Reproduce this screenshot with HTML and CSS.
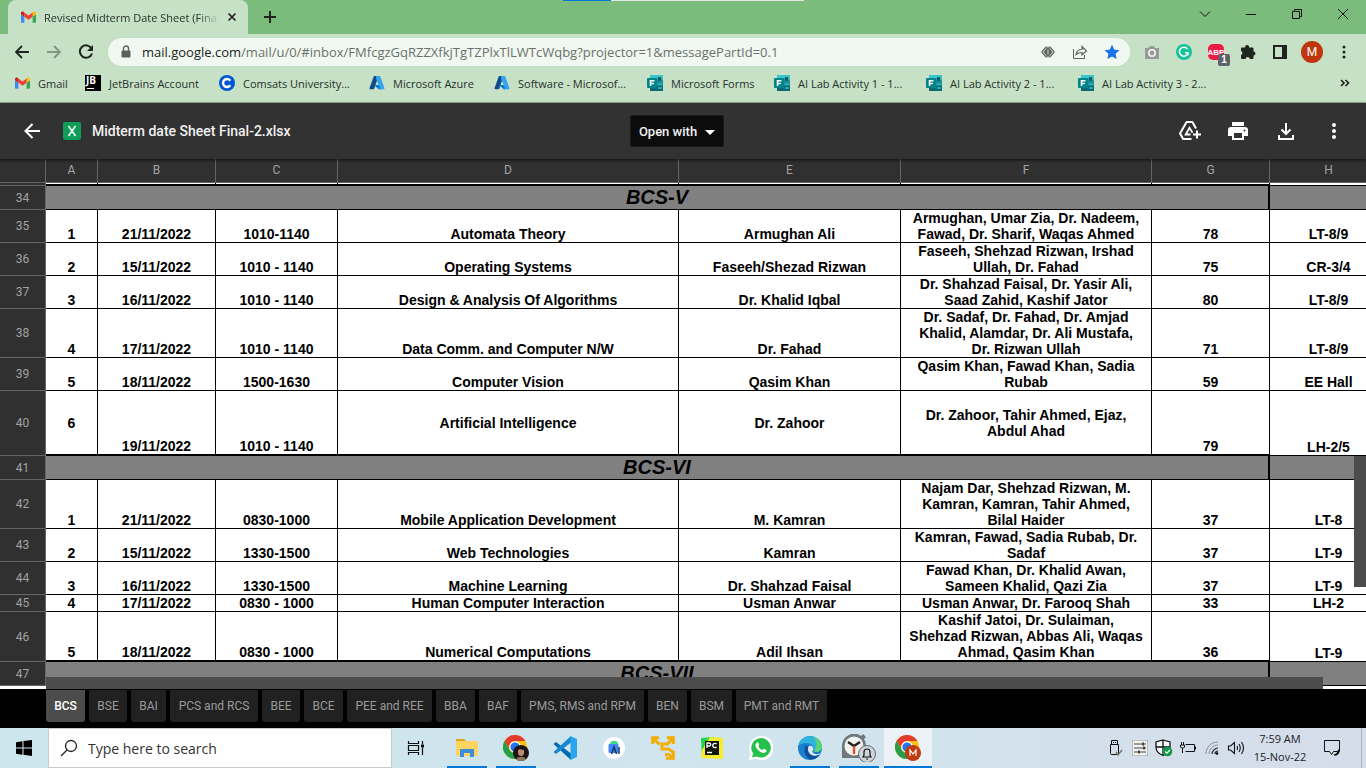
FILE: index.html
```
<!DOCTYPE html>
<html lang="en">
<head>
<meta charset="utf-8">
<title>Midterm date Sheet Final-2.xlsx</title>
<link rel="stylesheet" href="styles.css">
</head>
<body>
<svg class="defs" aria-hidden="true">
  <symbol id="gmail" viewBox="0 0 16 12">
    <path fill="#4285f4" d="M1 12h2.6V5.6L0 3v8a1 1 0 0 0 1 1z"/>
    <path fill="#34a853" d="M12.4 12H15a1 1 0 0 0 1-1V3l-3.6 2.6z"/>
    <path fill="#fbbc04" d="M12.4 1.2v4.6L16 3V1.7C16 .2 14.300-.5 13 .6z"/>
    <path fill="#ea4335" d="M3.600 5.800V1.200L8 4.500l4.400-3.300v4.600L8 9z"/>
    <path fill="#c5221f" d="M0 1.700V3l3.600 2.800V1.200L3 .6C1.700-.5 0 .2 0 1.700z"/>
  </symbol>
  <symbol id="azure" viewBox="0 0 16 16">
    <path fill="#114a8b" d="M5.500 1h4L5.300 13.600a1 1 0 0 1-.9.700H1.500a1 1 0 0 1-.9-1.300L4.600 1.700a1 1 0 0 1 .9-.7z"/>
    <path fill="#0078d4" d="M5 10h6.500l1 4.300H9.800z"/>
    <path fill="#35a5ef" d="M7.500 1h3a1 1 0 0 1 .9.700l4 11.300a1 1 0 0 1-.9 1.300h-4a1 1 0 0 0 .4-1.300L6.800 3z"/>
  </symbol>
  <symbol id="forms" viewBox="0 0 16 16">
    <path fill="#37c6d0" d="M3 0h13v6H3z"/><path fill="#1a8f98" d="M3 5h13v6H3z"/><path fill="#0a6970" d="M3 11h13v5H3z"/>
    <circle cx="12.500" cy="4" r="2" fill="#0b5b60"/><path fill="#25a9b2" d="M11 8h4v2h-4zm0 4h4v2h-4z"/>
    <rect y="3" width="10" height="10" rx="1" fill="#038387"/>
    <path d="M3.500 11V5.700h4M3.500 8.400h3.400" fill="none" stroke="#fff" stroke-width="1.500"/>
  </symbol>
  <symbol id="chrome" viewBox="0 0 24 24">
    <circle cx="12" cy="12" r="12" fill="#fbc116"/>
    <path fill="#e33b2e" d="M1.600 6A12 12 0 0 1 22.400 6H12a6 6 0 0 0-5.200 9z"/>
    <path fill="#269f4b" d="M1.600 6l5.200 9A6 6 0 0 0 12 18l2.500 0L12 24A12 12 0 0 1 1.600 6z"/>
    <circle cx="12" cy="12" r="5.800" fill="#fff"/><circle cx="12" cy="12" r="4.600" fill="#2272e8"/>
  </symbol>
</svg>

<div class="snap-strip"></div>

<header class="browser">
  <div class="tabstrip">
    <div class="tab">
      <svg class="gm"><use href="#gmail"/></svg>
      <span class="tab-title">Revised Midterm Date Sheet (Final</span>
      <button class="plain" aria-label="Close tab"><svg width="10" height="10" viewBox="0 0 10 10"><path d="M1.500 1.500l7 7m0-7l-7 7" stroke="#222" stroke-width="1.700"/></svg></button>
    </div>
    <button class="plain newtab" aria-label="New tab"><svg width="12" height="12" viewBox="0 0 12 12"><path d="M6 0v12M0 6h12" stroke="#1e231e" stroke-width="2"/></svg></button>
    <div class="winctl">
      <button class="plain" aria-label="Search tabs"><svg width="12" height="12" viewBox="0 0 12 12"><path d="M1 3.500l5 5 5-5" fill="none" stroke="#111"/></svg></button>
      <button class="plain" aria-label="Minimize"><svg width="10" height="10" viewBox="0 0 10 10"><path d="M0 5.500h10" stroke="#111"/></svg></button>
      <button class="plain" aria-label="Restore"><svg width="10" height="10" viewBox="0 0 10 10"><path d="M.5 2.500h7v7h-7zM2.500 2.500v-2h7v7h-2" fill="none" stroke="#111"/></svg></button>
      <button class="plain" aria-label="Close"><svg width="10" height="10" viewBox="0 0 10 10"><path d="M0 0l10 10M10 0L0 10" stroke="#111"/></svg></button>
    </div>
  </div>

  <div class="toolbar">
    <div class="nav">
      <button class="plain" aria-label="Back"><svg width="14" height="14" viewBox="0 0 14 14"><path d="M14 7H1.500M7 1L1 7l6 6" fill="none" stroke="#20241f" stroke-width="1.800"/></svg></button>
      <button class="plain" aria-label="Forward"><svg width="14" height="14" viewBox="0 0 14 14"><path d="M0 7h12.500M7 1l6 6-6 6" fill="none" stroke="#839583" stroke-width="1.800"/></svg></button>
      <button class="plain" aria-label="Reload"><svg width="16" height="16" viewBox="0 0 16 16"><path d="M13.500 4.500A6.200 6.200 0 1 0 14 9.500" fill="none" stroke="#20241f" stroke-width="2"/><path fill="#20241f" d="M15 1v6H9z"/></svg></button>
    </div>
    <div class="omnibox">
      <svg width="10" height="14" viewBox="0 0 10 14"><path d="M2.500 6V3.500a2.500 2.500 0 0 1 5 0V6" fill="none" stroke="#5b605b" stroke-width="1.400"/><rect x=".5" y="5.500" width="9" height="7" rx="1" fill="#5b605b"/></svg>
      <div class="url" role="textbox" aria-label="Address"><b>mail.google.com</b>/mail/u/0/#inbox/FMfcgzGqRZZXfkjTgTZPlxTlLWTcWqbg?projector=1&amp;messagePartId=0.1</div>
      <button class="plain" aria-label="Reader"><svg width="14" height="12" viewBox="0 0 14 12"><path d="M5.500.5L.7 6l4.800 5.500M8.500.5L13.300 6l-4.800 5.500" fill="none" stroke="#5f635f" stroke-width="1.200"/><path d="M7 .5L11.500 6 7 11.500 2.500 6z" fill="#5f635f"/><path d="M7 3.500v5" stroke="#c5cbc5" stroke-width="1.200"/></svg></button>
      <button class="plain" aria-label="Share"><svg width="16" height="14" viewBox="0 0 16 14"><path d="M1.500 4v9.500h11V10" fill="none" stroke="#5f635f"/><path d="M4 9.500c.5-3.500 2.500-5 6-5V1.500L14.500 6 10 10V7.500c-3 0-4.500.5-6 2z" fill="none" stroke="#5f635f" stroke-width="1.200"/></svg></button>
      <button class="plain" aria-label="Bookmark"><svg width="16" height="16" viewBox="0 0 16 16"><path fill="#1a73e8" d="M8 .7l2.200 4.900 5.300.6-3.900 3.600 1 5.300L8 12.400l-4.600 2.700 1-5.300L.5 6.200l5.300-.6z"/></svg></button>
    </div>
    <div class="exts">
      <button class="plain" aria-label="Screenshot"><svg width="16" height="14" viewBox="0 0 16 14"><path fill="#999" d="M1 3h3l2-2h4l1 2h4v11H1z"/><circle cx="8" cy="8" r="3.200" fill="#999" stroke="#f2f2f2" stroke-width="1.600"/></svg></button>
      <button class="plain" aria-label="Grammarly"><svg width="16" height="16" viewBox="0 0 16 16"><circle cx="8" cy="8" r="8" fill="#15c39a"/><path d="M11.500 5A4.500 4.500 0 1 0 12 9.500M9 8.800h3v2.500" fill="none" stroke="#fff" stroke-width="1.400"/></svg></button>
      <button class="plain abp" aria-label="Adblock Plus">ABP<span class="count">1</span></button>
      <button class="plain" aria-label="Extensions"><svg width="16" height="16" viewBox="0 0 16 16"><path fill="#20241f" d="M1 4.500a1 1 0 0 1 1-1h3.200a2 2 0 1 1 3.800 0h3.500a1 1 0 0 1 1 1V7.500a2 2 0 1 1 0 4V14a1 1 0 0 1-1 1H9.800a2.100 2.100 0 0 0-4.200 0H2a1 1 0 0 1-1-1v-3a2.100 2.100 0 0 0 0-4z"/></svg></button>
      <button class="plain" aria-label="Side panel"><svg width="14" height="14" viewBox="0 0 14 14"><path d="M1 1h12v12H1z" fill="none" stroke="#20241f" stroke-width="2"/><path fill="#20241f" d="M9 0h5v14H9z"/></svg></button>
      <button class="plain avatar" aria-label="Profile">M</button>
      <button class="plain" aria-label="Menu"><svg width="4" height="14" viewBox="0 0 4 14"><g fill="#20241f"><circle cx="2" cy="2" r="1.500"/><circle cx="2" cy="7" r="1.500"/><circle cx="2" cy="12" r="1.500"/></g></svg></button>
    </div>
  </div>

  <nav class="bookmarks">
    <a href="#"><svg class="gm"><use href="#gmail"/></svg>Gmail</a>
    <a href="#"><span class="jb">JB</span>JetBrains Account</a>
    <a href="#"><svg class="fav" viewBox="0 0 16 16"><circle cx="8" cy="8" r="8" fill="#0056d2"/><path d="M11.300 5.700a4 4 0 1 0 0 4.600" fill="none" stroke="#fff" stroke-width="2.400"/></svg>Comsats University...</a>
    <a href="#"><svg class="fav"><use href="#azure"/></svg>Microsoft Azure</a>
    <a href="#"><svg class="fav"><use href="#azure"/></svg>Software - Microsof...</a>
    <a href="#"><svg class="fav"><use href="#forms"/></svg>Microsoft Forms</a>
    <a href="#"><svg class="fav"><use href="#forms"/></svg>AI Lab Activity 1 - 1...</a>
    <a href="#"><svg class="fav"><use href="#forms"/></svg>AI Lab Activity 2 - 1...</a>
    <a href="#"><svg class="fav"><use href="#forms"/></svg>AI Lab Activity 3 - 2...</a>
    <button class="plain" aria-label="More bookmarks"><svg width="10" height="8" viewBox="0 0 10 8"><path d="M1 1l3 3-3 3M5.500 1l3 3-3 3" fill="none" stroke="#20241f" stroke-width="1.700"/></svg></button>
  </nav>
</header>

<div class="appbar">
  <div class="file">
    <button class="plain" aria-label="Back"><svg width="16" height="16" viewBox="0 0 16 16"><path d="M16 8H1.500M8.500 1l-7 7 7 7" fill="none" stroke="#fff" stroke-width="2"/></svg></button>
    <svg class="xl" width="18" height="18" viewBox="0 0 18 18"><rect width="18" height="18" rx="2" fill="#0f9d58"/><path d="M5.500 4l7 10m0-10l-7 10" stroke="#e4f5ec" stroke-width="1.800"/></svg>
    <h1>Midterm date Sheet Final-2.xlsx</h1>
  </div>
  <button class="openwith">Open with<svg width="10" height="7" viewBox="0 0 10 7"><path fill="#fff" d="M0 2h10L5 7z"/></svg></button>
  <div class="actions">
    <button class="plain" aria-label="Add to Drive"><svg width="24" height="22" viewBox="0 0 24 22"><path d="M13.500 19H5.200L2 13.500 8.600 2h5.800l3.600 6.500" fill="none" stroke="#fff" stroke-width="2" stroke-linejoin="round"/><path d="M12.500 14.500H7.700l3.800-6.800 3 5" fill="none" stroke="#fff" stroke-width="1.800"/><path d="M19 10.500v8M15 14.500h8" stroke="#fff" stroke-width="2"/></svg></button>
    <button class="plain" aria-label="Print"><svg width="20" height="18" viewBox="0 0 20 18"><path fill="#fff" d="M4 0h12v4H4zM3 5h14a3 3 0 0 1 3 3v6h-4v4H4v-4H0V8a3 3 0 0 1 3-3z"/><path fill="#333" d="M6 11h8v5H6z"/><circle cx="16.500" cy="8.500" r="1" fill="#333"/></svg></button>
    <button class="plain" aria-label="Download"><svg width="16" height="17" viewBox="0 0 16 17"><path d="M8 0v10M3.500 6.500L8 11l4.500-4.500M1 12v4h14v-4" fill="none" stroke="#fff" stroke-width="2"/></svg></button>
    <button class="plain" aria-label="More actions"><svg width="4" height="16" viewBox="0 0 4 16"><g fill="#fff"><circle cx="2" cy="2" r="2"/><circle cx="2" cy="8" r="2"/><circle cx="2" cy="14" r="2"/></g></svg></button>
  </div>
</div>

<main class="sheet">
  <table>
    <colgroup><col class="c0"><col class="ca"><col class="cb"><col class="cc"><col class="cd"><col class="ce"><col class="cf"><col class="cb"><col class="cb"></colgroup>
    <thead><tr><th></th><th>A</th><th>B</th><th>C</th><th>D</th><th>E</th><th>F</th><th>G</th><th>H</th></tr></thead>
    <tbody>
      <tr class="sliver thick"><th></th><td></td><td></td><td></td><td></td><td></td><td></td><td></td><td></td></tr>
      <tr class="band"><th>34</th><td colspan="7">BCS-V</td><td></td></tr>
      <tr><th>35</th><td>1</td><td>21/11/2022</td><td>1010-1140</td><td>Automata Theory</td><td>Armughan Ali</td><td>Armughan, Umar Zia, Dr. Nadeem,<br>Fawad, Dr. Sharif, Waqas Ahmed</td><td>78</td><td>LT-8/9</td></tr>
      <tr><th>36</th><td>2</td><td>15/11/2022</td><td>1010 - 1140</td><td>Operating Systems</td><td>Faseeh/Shezad Rizwan</td><td>Faseeh, Shehzad Rizwan, Irshad<br>Ullah, Dr. Fahad</td><td>75</td><td>CR-3/4</td></tr>
      <tr><th>37</th><td>3</td><td>16/11/2022</td><td>1010 - 1140</td><td>Design &amp; Analysis Of Algorithms</td><td>Dr. Khalid Iqbal</td><td>Dr. Shahzad Faisal, Dr. Yasir Ali,<br>Saad Zahid, Kashif Jator</td><td>80</td><td>LT-8/9</td></tr>
      <tr><th>38</th><td>4</td><td>17/11/2022</td><td>1010 - 1140</td><td>Data Comm. and Computer N/W</td><td>Dr. Fahad</td><td>Dr. Sadaf, Dr. Fahad, Dr. Amjad<br>Khalid, Alamdar, Dr. Ali Mustafa,<br>Dr. Rizwan Ullah</td><td>71</td><td>LT-8/9</td></tr>
      <tr><th>39</th><td>5</td><td>18/11/2022</td><td>1500-1630</td><td>Computer Vision</td><td>Qasim Khan</td><td>Qasim Khan, Fawad Khan, Sadia<br>Rubab</td><td>59</td><td>EE Hall</td></tr>
      <tr class="tall thick"><th>40</th><td class="mid">6</td><td>19/11/2022</td><td>1010 - 1140</td><td class="mid">Artificial Intelligence</td><td class="mid">Dr. Zahoor</td><td class="mid">Dr. Zahoor, Tahir Ahmed, Ejaz,<br>Abdul Ahad</td><td>79</td><td>LH-2/5</td></tr>
      <tr class="band"><th>41</th><td colspan="7">BCS-VI</td><td></td></tr>
      <tr><th>42</th><td>1</td><td>21/11/2022</td><td>0830-1000</td><td>Mobile Application Development</td><td>M. Kamran</td><td>Najam Dar, Shehzad Rizwan, M.<br>Kamran, Kamran, Tahir Ahmed,<br>Bilal Haider</td><td>37</td><td>LT-8</td></tr>
      <tr><th>43</th><td>2</td><td>15/11/2022</td><td>1330-1500</td><td>Web Technologies</td><td>Kamran</td><td>Kamran, Fawad, Sadia Rubab, Dr.<br>Sadaf</td><td>37</td><td>LT-9</td></tr>
      <tr><th>44</th><td>3</td><td>16/11/2022</td><td>1330-1500</td><td>Machine Learning</td><td>Dr. Shahzad Faisal</td><td>Fawad Khan, Dr. Khalid Awan,<br>Sameen Khalid, Qazi Zia</td><td>37</td><td>LT-9</td></tr>
      <tr><th>45</th><td>4</td><td>17/11/2022</td><td>0830 - 1000</td><td>Human Computer Interaction</td><td>Usman Anwar</td><td>Usman Anwar, Dr. Farooq Shah</td><td>33</td><td>LH-2</td></tr>
      <tr class="thick"><th>46</th><td>5</td><td>18/11/2022</td><td>0830 - 1000</td><td>Numerical Computations</td><td>Adil Ihsan</td><td>Kashif Jatoi, Dr. Sulaiman,<br>Shehzad Rizwan, Abbas Ali, Waqas<br>Ahmad, Qasim Khan</td><td>36</td><td>LT-9</td></tr>
      <tr class="band"><th>47</th><td colspan="7">BCS-VII</td><td></td></tr>
    </tbody>
  </table>
  <div class="vbar"></div>
  <div class="hbar"></div>
</main>

<nav class="sheettabs">
  <button class="on">BCS</button><button>BSE</button><button>BAI</button><button>PCS and RCS</button><button>BEE</button><button>BCE</button><button>PEE and REE</button><button>BBA</button><button>BAF</button><button>PMS, RMS and RPM</button><button>BEN</button><button>BSM</button><button>PMT and RMT</button>
</nav>

<footer class="taskbar">
  <button class="plain start" aria-label="Start"><svg width="16" height="16" viewBox="0 0 16 16"><path fill="#000" d="M0 2.200l6.500-.9v6.200H0zM7.500 1.100L16 0v7.500H7.500zM0 8.500h6.500v6.200L0 13.800zM7.500 8.500H16V16l-8.500-1.200z"/></svg></button>
  <label class="search"><svg width="18" height="18" viewBox="0 0 18 18"><circle cx="11" cy="7" r="5.500" fill="none" stroke="#222" stroke-width="1.300"/><path d="M7 11l-6 6" stroke="#222" stroke-width="1.300"/></svg><input type="text" placeholder="Type here to search" aria-label="Search"></label>
  <button class="plain task" aria-label="Task view"><svg width="18" height="16" viewBox="0 0 18 16"><path d="M1.500 1v2.500h10V1M1.500 15v-2.500h10V15M1.500 5.500h10v5h-10zM15.500 1v3M15.500 8v7" fill="none" stroke="#111" stroke-width="1.200"/><path d="M14 4.500h3v3h-3z"/></svg></button>
  <div class="apps">
    <button class="plain run" aria-label="File Explorer"><svg width="22" height="20" viewBox="0 0 22 20"><path fill="#e0a21b" d="M0 1h8l2 2v3H0z"/><rect y="3" width="22" height="15" rx="1" fill="#fcd462"/><path fill="#3d8ed6" d="M4 11h14v8h-4v-4H8v4H4z"/></svg></button>
    <button class="plain run" aria-label="Chrome"><svg width="26" height="26" viewBox="0 0 26 26"><use href="#chrome" width="24" height="24"/><circle cx="18" cy="18" r="8" fill="#1d1614"/><path fill="#b98b72" d="M15 15c0-3 6-3 6 0v3c0 4-6 4-6 0z"/><path fill="#0f0b0a" d="M14 16c0-5 8-5 8 0l-1-1c-2 0-3-1-4-1s-2 1-3 2z"/><path fill="#8d755d" d="M13 24c2-3 8-3 10 0-3 3-7 3-10 0z"/></svg></button>
    <button class="plain" aria-label="Visual Studio Code"><svg width="24" height="24" viewBox="0 0 24 24"><path fill="#0068b0" d="M.5 8L3 6l15 11.500V24z"/><path fill="#1587d1" d="M.5 16L3 18 18 6.500V0z"/><path fill="#2ba5ee" d="M17.500 0L24 3v18l-6.500 3z"/></svg></button>
    <button class="plain" aria-label="Android Studio"><svg width="22" height="22" viewBox="0 0 22 22"><circle cx="11" cy="11" r="11" fill="#fff"/><path fill="#3ddc84" d="M7 6c2-3 6-3 8 0v3H7z"/><rect x="5.500" y="7" width="10" height="9" rx="1" fill="#4285f4"/><path d="M8.500 17l2.500-7 2.500 7M16 10v7" fill="none" stroke="#123b5d" stroke-width="1.500"/></svg></button>
    <button class="plain" aria-label="VMware"><svg width="24" height="24" viewBox="0 0 24 24"><g fill="none" stroke="#f3ae00" stroke-width="3"><path d="M1.700 8V1.700H8M2 2l6.500 6.500M16 1.700h6.300V8M22 2l-5.500 6H11v5h6.500l4.500 3M22.300 15v7.300H15M14 18.500l4 0 4 4"/></g></svg></button>
    <button class="plain" aria-label="PyCharm"><svg width="22" height="22" viewBox="0 0 22 22"><path fill="#21d745" d="M0 1l13-1 2 12-14 9z"/><path fill="#f5ec2d" d="M9 0l13 1v21L0 21l1-8z"/><path fill="#101510" d="M4 4h14v14H4z"/><path d="M6 11V6h2.200a1.300 1.300 0 0 1 0 3H6M15.500 7a2.200 2.200 0 1 0 0 3M6 15.500h5" fill="none" stroke="#fff" stroke-width="1.300"/></svg></button>
    <button class="plain" aria-label="WhatsApp"><svg width="24" height="24" viewBox="0 0 24 24"><path fill="#fff" d="M12 0a12 12 0 1 1-5 22.500L0 24l1.500-6.500A12 12 0 0 1 12 0z"/><path fill="#28c04c" d="M12 2a9.800 9.800 0 1 1-4.500 18.500L3 21.500l1.200-4A9.800 9.800 0 0 1 12 2z"/><path fill="#fff" d="M8 6.500c1.200-.8 1.500.5 2 2s-1 1.500-.5 2.300c1 1.700 2 2.500 3.600 3.200.7.300 1.200-1.500 2-1.200l2.200 1.100c.7.600-.5 3-2.500 3C11 16.900 5.500 11 6.500 8.500z"/></svg></button>
    <button class="plain run" aria-label="Edge"><svg width="24" height="24" viewBox="0 0 24 24"><circle cx="12" cy="12" r="12" fill="#1b7fd0"/><path fill="#2fb5dc" d="M.5 9.500C3-3 21-3 24 10c.5 5-5 7-9 5 2-3-1-8-6-8-4 0-7 1-8.500 2.500z"/><path fill="#5cd675" d="M16 .8c5 2 8 6 8 10 0 4-4 6-8 5 3-4 3-10 0-15z"/><path fill="#10509b" d="M8 9c-3 3-2 10 3 14 5 1 9-1 11-5-5 3-12 1-12-5 0-2 0-3-2-4z"/><path fill="#dcecf5" d="M11 10c3-1 5 2 4 4-1 1-1 3 2 4 3 .5 5-.5 6-1-4 5-13 3-13-4 0-1 .3-2 1-3z"/></svg></button>
    <button class="plain run" aria-label="Clock"><svg width="34" height="28" viewBox="0 0 34 28"><path fill="#70777d" d="M0 12A12 12 0 0 1 19 2l2-2 3 3-2 2a12 12 0 0 1 2 7v12H0z"/><circle cx="12" cy="12" r="9.500" fill="#f3f3f1"/><path d="M6 8l6 4 6-4" fill="none" stroke="#222" stroke-width="2.400"/><path d="M12 12v8" stroke="#dc5426" stroke-width="2.400"/><circle cx="25" cy="20" r="8.500" fill="#d0d7dc" stroke="#63696e"/><path d="M21 23h8l-1-2v-3a3 3 0 0 0-6 0v3zM24 25h2" fill="none" stroke="#111" stroke-width="1.200"/></svg></button>
    <button class="plain active" aria-label="Chrome, profile M"><svg width="26" height="26" viewBox="0 0 26 26"><use href="#chrome" width="24" height="24"/><circle cx="18" cy="18" r="8" fill="#c0390f"/><path d="M15 21v-6l3 4 3-4v6" fill="none" stroke="#fff" stroke-width="1.200"/></svg></button>
  </div>
  <div class="tray">
    <svg width="14" height="18" viewBox="0 0 14 18"><path d="M2.500 5.500v-4h6v4M1.500 5.500h8v9a1 1 0 0 1-1 1h-6a1 1 0 0 1-1-1zM4.500 3v1M6.500 3v1" fill="none" stroke="#111"/><path d="M7 13l2 3 4-5" fill="none" stroke="#777" stroke-width="1.500"/></svg>
    <svg width="16" height="16" viewBox="0 0 16 16"><rect width="16" height="16" fill="#f1f1f1" stroke="#888"/><path d="M2 4h12M2 8h12M2 12h12" stroke="#444"/><path d="M10 2.500h2v3h-2zM11 6.500h2v3h-2zM6 10.500h2v3H6z" fill="#444"/></svg>
    <svg width="18" height="18" viewBox="0 0 18 18"><path d="M8 1l7 2v5c0 4-3 7-7 8.500C4 15 1 12 1 8V3z" fill="#f7fafc" stroke="#111" stroke-width="1.300"/><path d="M8 1v15M1 8h14" stroke="#111" stroke-width="1.300"/><circle cx="12.500" cy="12.500" r="4.800" fill="#139a48"/><path d="M10.200 12.500l1.700 1.700 3-3.200" fill="none" stroke="#fff" stroke-width="1.200"/></svg>
    <svg width="16" height="12" viewBox="0 0 16 12"><path d="M5.500 9.500h9v-7h-9M15.500 4.500v3M1.500 0v3M3.500 0v3M.5 3h4v2l-1 1h-2l-1-1zM2.500 6v5" fill="none" stroke="#111"/></svg>
    <svg width="14" height="14" viewBox="0 0 14 14"><path d="M1 13C1 6 6 1 13 1M4 13c0-5 4-9 9-9" fill="none" stroke="#8b929b"/><path d="M7 13c0-3 3-6 6-6M10 13c0-2 1-3 3-3" fill="none" stroke="#222" stroke-width="1.200"/><circle cx="12" cy="12.500" r="1.300"/></svg>
    <svg width="18" height="14" viewBox="0 0 18 14"><path d="M1.500 5v4h2l4 3.500V1.500L3.500 5zM10 5q1 2 0 4M12 3q2.500 4 0 8M14.500 1q4 6 0 12" fill="none" stroke="#111" stroke-width="1.100"/></svg>
    <div class="clock"><span>7:59 AM</span><span>15-Nov-22</span></div>
    <svg width="18" height="18" viewBox="0 0 18 18"><path d="M1.500 1.500h15v11h-6l-2 3-2-3h-5z" fill="none" stroke="#111"/><path fill="#111" d="M15 10a3.500 3.500 0 1 1-5 5.500c3 0 5-2.500 5-5.500z"/></svg>
  </div>
</footer>
</body>
</html>
```
FILE: styles.css
```
* { box-sizing: border-box; }
body {
  margin: 0;
  height: 100vh;
  display: flex;
  flex-direction: column;
  overflow: hidden;
  position: relative;
  background: #000;
  font-family: "Open Sans", "Noto Sans", sans-serif;
}
.defs { display: none; }
svg { display: block; flex: none; }
.plain {
  border: 0;
  padding: 0;
  background: none;
  font: inherit;
  display: flex;
  align-items: center;
  justify-content: center;
}
.snap-strip {
  position: absolute;
  top: 0;
  left: 563px;
  width: 241px;
  height: 1px;
  background: linear-gradient(90deg, #0078d7 48px, #e6e6e6 48px);
}

/* Browser frame */
.browser {
  background: #c6e1c6;
  border-bottom: 1px solid #9db59d;
  color: #28302a;
}
.tabstrip {
  height: 34px;
  padding-left: 8px;
  display: flex;
  background: #7bbb7c;
}
.tab {
  width: 240px;
  display: flex;
  align-items: center;
  gap: 8px;
  padding: 0 11px 0 13px;
  background: #c6e1c6;
  border-radius: 8px 8px 0 0;
}
.gm { width: 15px; height: 12px; }
.fav { width: 16px; height: 16px; }
.tab-title {
  flex: 1;
  font-size: 11px;
  white-space: nowrap;
  overflow: hidden;
  -webkit-mask-image: linear-gradient(90deg, #000 88%, transparent);
  mask-image: linear-gradient(90deg, #000 88%, transparent);
}
.newtab { width: 44px; }
.winctl { display: flex; margin-left: auto; padding-bottom: 6px; }
.winctl .plain { width: 46px; }
.toolbar {
  height: 36px;
  display: flex;
  align-items: center;
}
.nav { display: flex; padding-left: 6px; width: 108px; }
.nav .plain { width: 32px; height: 28px; }
.omnibox {
  flex: 1;
  height: 28px;
  border-radius: 14px;
  background: #f1f8f1;
  display: flex;
  align-items: center;
  padding: 0 2px 0 13px;
}
.omnibox .plain { width: 32px; height: 28px; }
.url {
  flex: 1;
  margin-left: 11px;
  font-size: 13px;
  white-space: nowrap;
  overflow: hidden;
  color: #6b706b;
}
.url b { font-weight: 400; color: #202420; }
.exts { display: flex; align-items: center; padding: 0 6px; }
.exts .plain { width: 32px; height: 28px; }
.exts .abp {
  position: relative;
  width: 16px;
  height: 16px;
  margin: 0 8px;
  background: #ec1b46;
  border-radius: 5px;
  color: #fff;
  font: bold 8px "Liberation Sans", sans-serif;
}
.count {
  position: absolute;
  left: 10px;
  top: 10px;
  width: 12px;
  height: 12px;
  border-radius: 2px;
  background: #5f6368;
  font-size: 10px;
  line-height: 12px;
}
.exts .avatar {
  width: 22px;
  height: 22px;
  margin: 0 5px;
  border-radius: 50%;
  background: #bf360c;
  color: #fff;
  font: 12px Roboto, sans-serif;
}
.bookmarks {
  height: 32px;
  padding: 0 16px 6px 15px;
  display: grid;
  grid-template-columns: 70px 134px 150px 125px 153px 127px 152px 152px 1fr auto;
  align-items: center;
  font-size: 11px;
  white-space: nowrap;
}
.bookmarks a {
  display: flex;
  align-items: center;
  gap: 8px;
  color: inherit;
  text-decoration: none;
}
.jb {
  width: 16px;
  height: 16px;
  padding-left: 1px;
  background: linear-gradient(#fff, #fff) 2px 13px / 7px 1px no-repeat #000;
  color: #fff;
  font: bold 10px/10px "Open Sans", sans-serif;
}

/* Viewer bar */
.appbar {
  position: relative;
  z-index: 2;
  height: 56px;
  display: grid;
  grid-template-columns: 1fr auto 1fr;
  align-items: center;
  padding: 0 16px;
  background: #323232;
  box-shadow: 0 1px 3px rgba(0, 0, 0, .7);
  color: #f1f1f1;
  font-family: Roboto, sans-serif;
}
.file { display: flex; align-items: center; }
.file .plain { width: 32px; height: 32px; }
.xl { margin-left: 15px; }
.file h1 { margin: 0 0 0 11px; font-size: 14px; font-weight: 500; }
.openwith {
  height: 32px;
  margin-left: -12px;
  padding: 0 8px;
  display: flex;
  align-items: center;
  gap: 8px;
  border: 1px solid #1a1a1a;
  border-radius: 2px;
  background: #0c0c0c;
  color: #f1f1f1;
  font: 500 13px Roboto, sans-serif;
}
.actions { display: flex; justify-content: flex-end; margin-right: -8px; }
.actions .plain { width: 48px; height: 32px; }

/* Spreadsheet */
.sheet {
  position: relative;
  flex: 1;
  min-height: 0;
  overflow: hidden;
  background: #fff;
}
table {
  width: 1388px;
  table-layout: fixed;
  border-collapse: separate;
  border-spacing: 0;
  font-family: "Liberation Sans", Arial, sans-serif;
}
.c0 { width: 46px; }
.ca { width: 52px; }
.cb { width: 118px; }
.cc { width: 122px; }
.cd { width: 341px; }
.ce { width: 222px; }
.cf { width: 251px; }
th {
  padding: 0;
  background: #303030;
  border-right: 1px solid #666;
  border-bottom: 1px solid #666;
  color: #a3a3a3;
  font: 12px/14px Roboto, sans-serif;
}
thead th { height: 24px; padding-bottom: 2px; }
td {
  padding: 0;
  border-right: 1px solid #000;
  border-bottom: 1px solid #000;
  background: #fff;
  color: #000;
  font-size: 14px;
  font-weight: bold;
  line-height: 16px;
  text-align: center;
  vertical-align: bottom;
  white-space: nowrap;
}
.thick td { border-bottom-width: 2px; }
.thick td:last-child { border-bottom-width: 1px; }
.sliver { height: 3px; }
.tall { height: 65px; }
.mid { vertical-align: middle; }
.band td {
  height: 24px;
  background: #808080;
  font-size: 20px;
  font-style: italic;
  line-height: 23px;
}
.band td:nth-child(2) { border-right-width: 2px; }
.vbar {
  position: absolute;
  right: 0;
  bottom: 102px;
  width: 12px;
  height: 131px;
  background: #4c4c4c;
}
.hbar {
  position: absolute;
  left: 46px;
  right: 43px;
  bottom: 0;
  height: 12px;
  background: #4c4c4c;
}
.sheettabs {
  height: 39px;
  padding: 1px 0 6px 46px;
  display: grid;
  grid-template-columns: 39px 38px 35px 88px 38px 39px 85px 39px 38px 123px 39px 41px 91px;
  column-gap: 4px;
  background: #000;
}
.sheettabs button {
  border: 0;
  border-radius: 0 0 3px 3px;
  padding: 0;
  background: #212121;
  color: #9a9a9a;
  font: 12px Roboto, sans-serif;
  white-space: nowrap;
}
.sheettabs .on { background: #4c4c4c; color: #fff; font-weight: 500; }

/* Taskbar */
.taskbar {
  height: 40px;
  display: flex;
  background: linear-gradient(90deg, #cde6ee, #d0e4ee 60%, #d6dcea);
}
.start { width: 48px; }
.search {
  width: 344px;
  display: flex;
  align-items: center;
  padding-left: 11px;
  gap: 10px;
  border: 1px solid #c9c9c9;
  background: #fff;
}
.search input {
  border: 0;
  padding: 0;
  min-width: 0;
  flex: 1;
  outline: 0;
  background: none;
  font: 14px "Open Sans", sans-serif;
}
.search input::placeholder { color: #333; opacity: 1; }
.task { width: 48px; margin-right: 3px; }
.apps { display: flex; gap: 1px; }
.apps .plain { width: 48px; }
.run { background: linear-gradient(#0078d7, #0078d7) center bottom / 40px 2px no-repeat; }
.apps .active { background: linear-gradient(#0078d7, #0078d7) center bottom / 48px 2px no-repeat #ebf1f7; }
.tray {
  margin-left: auto;
  display: grid;
  grid-template-columns: repeat(6, 24px) 64px 40px;
  align-items: center;
  justify-items: center;
  padding-right: 9px;
  margin-right: 4px;
  border-right: 1px solid #aab4c0;
}
.clock {
  display: flex;
  flex-direction: column;
  align-items: center;
  color: #1d2126;
  font-size: 11px;
  line-height: 18px;
  white-space: nowrap;
}
```
